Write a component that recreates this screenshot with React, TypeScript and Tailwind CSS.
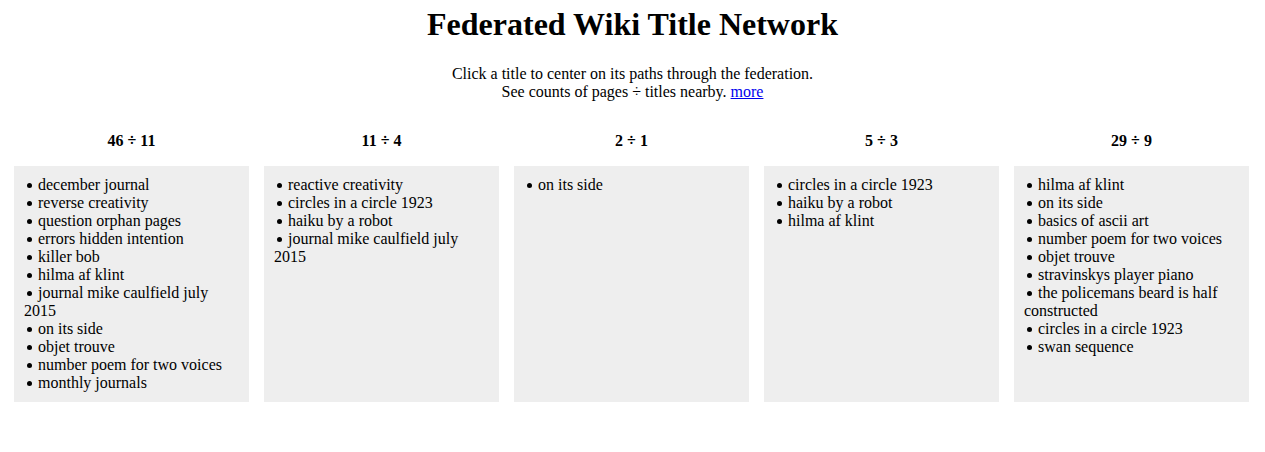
const columns = [
  {
    count: '46 ÷ 11',
    titles: [
      'december journal',
      'reverse creativity',
      'question orphan pages',
      'errors hidden intention',
      'killer bob',
      'hilma af klint',
      'journal mike caulfield july 2015',
      'on its side',
      'objet trouve',
      'number poem for two voices',
      'monthly journals',
    ],
  },
  {
    count: '11 ÷ 4',
    titles: ['reactive creativity', 'circles in a circle 1923', 'haiku by a robot', 'journal mike caulfield july 2015'],
  },
  { count: '2 ÷ 1', titles: ['on its side'] },
  { count: '5 ÷ 3', titles: ['circles in a circle 1923', 'haiku by a robot', 'hilma af klint'] },
  {
    count: '29 ÷ 9',
    titles: [
      'hilma af klint',
      'on its side',
      'basics of ascii art',
      'number poem for two voices',
      'objet trouve',
      'stravinskys player piano',
      'the policemans beard is half constructed',
      'circles in a circle 1923',
      'swan sequence',
    ],
  },
];

export default function App() {
  return (
    <div className="min-h-[452px] bg-white text-black font-['Liberation_Serif','Times_New_Roman',serif] text-[16px] leading-[18px]">
      {/* Header */}
      <h1 className="pt-[6px] text-center text-[32px] leading-[37px] font-bold">Federated Wiki Title Network</h1>
      <p className="mt-[22px] text-center">
        Click a title to center on its paths through the federation.
        <br />
        See counts of pages ÷ titles nearby.{' '}
        <a href="#" className="text-[#0000ee] underline">
          more
        </a>
      </p>

      {/* Columns */}
      <div className="mt-[31px] ml-[14px] flex gap-[15px]">
        {columns.map((col) => (
          <div key={col.count} className="flex w-[235px] flex-col">
            <div className="text-center font-bold">{col.count}</div>
            <div className="mt-[16px] flex-1 bg-[#eeeeee] px-[10px] pt-[10px] pb-[10px]">
              {col.titles.map((t) => (
                <div key={t} className="cursor-pointer">
                  <span className="inline-block w-[14px]">
                    <span className="relative bottom-[1px] ml-[3px] inline-block h-[5px] w-[5px] rounded-full bg-black align-middle" />
                  </span>
                  {t}
                </div>
              ))}
            </div>
          </div>
        ))}
      </div>
    </div>
  );
}
